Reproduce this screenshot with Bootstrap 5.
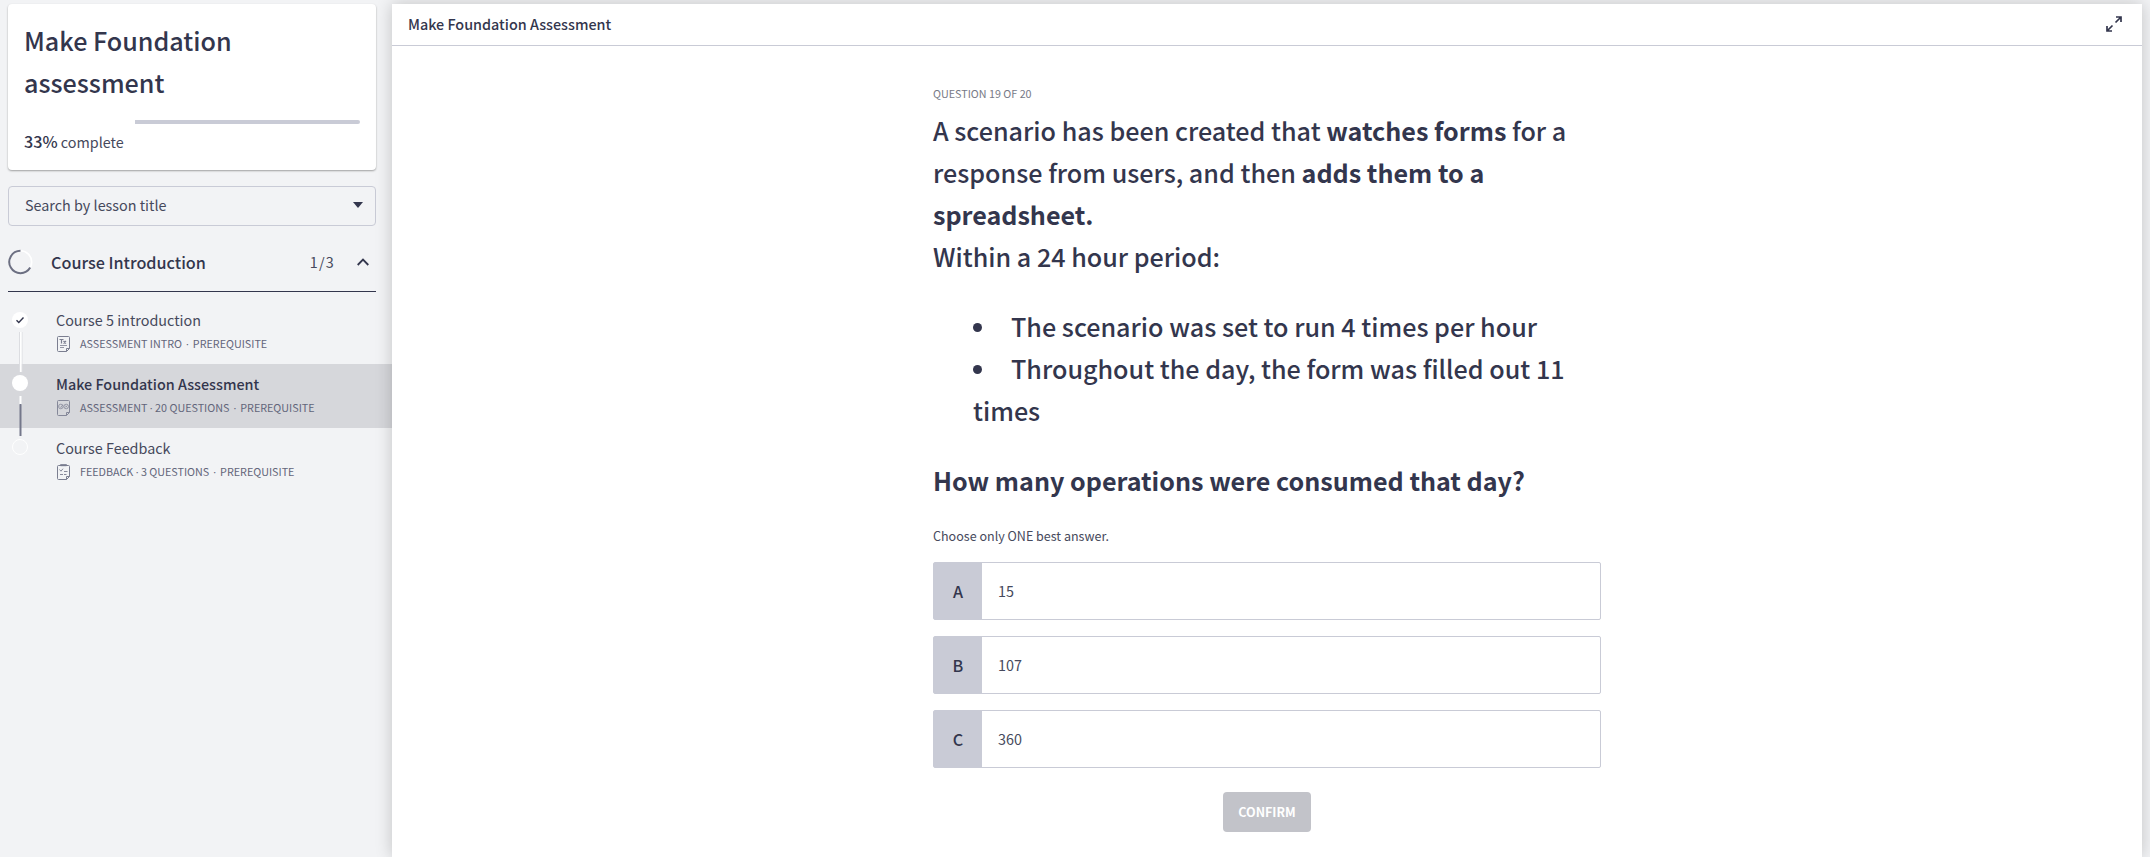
<!DOCTYPE html>
<html lang="en">
<head>
<meta charset="utf-8">
<title>Make Foundation Assessment</title>
<link rel="stylesheet" href="https://cdn.jsdelivr.net/npm/bootstrap@5.3.0/dist/css/bootstrap.min.css">
<style>
:root{--ink:#33364d;--text:#46495c;--soft:#62657a;--line:#c9cbd6}
body{font-family:"Noto Sans CJK SC","Open Sans",sans-serif;background:#f2f3f5;color:var(--text);height:857px;overflow:hidden;white-space:nowrap}
.semi{font-weight:500;color:var(--ink)}
.side{width:392px;padding:4px 16px 0 8px}
.course-card{height:166px;border-radius:4px;background:#fff;box-shadow:0 1px 2px rgba(0,0,0,.35);padding:15px 16px 0}
.course-title{font-size:25.14px;line-height:42px;margin:0}
.meter{height:4px;margin-top:17px}
.meter-rest{height:4px;background:var(--line);border-radius:0 2px 2px 0}
.complete{margin-top:4px}
.t16{font-size:14.36px;line-height:24px}
.t18{font-size:16.18px;line-height:26px}
.t12{font-size:10.75px;line-height:18px}
.t14{font-size:12.54px;line-height:20px}
.lesson-search{height:40px;margin-top:16px;border:1px solid var(--line);border-radius:4px;padding:0 12px 2px 16px}
.section-head{height:66px;border-bottom:1px solid var(--ink);margin-bottom:6px;padding-top:6px}
.section-title{padding-left:1px}
.section-count{letter-spacing:1.2px}
.chevron{margin:0 7px 0 22px}
.lesson{height:64px;margin:0 -16px 0 -8px;padding:8px 0 0 12px}
.lesson.active{background:#d6d7db}
.lesson.first{height:66px;padding-top:10px}
.rail{width:44px;margin-top:4px}
.lesson-sub{height:20px;color:var(--soft);margin-top:2px}
.lesson-sub svg{margin:0 9px 0 1px}
.sep{font-family:"Open Sans",sans-serif}
.sep.wide{padding:0 4px}
.main-pane{width:1750px;margin-top:4px;height:853px;background:#fff;box-shadow:0 0 16px rgba(0,0,0,.2)}
.pane-head{height:42px;border-bottom:1px solid var(--line);padding:0 20px 2px 16px}
.question{width:668px;margin-left:541px;padding-top:39px}
.q-count{color:#777a86}
.q-text{font-size:25.14px;line-height:42px;padding-top:6px}
.q-text b{font-size:25.1px}
.q-list{padding-left:40px;margin:28px 0;list-style:none}
.dot{display:inline-block;width:9px;height:9px;border-radius:50%;background:var(--ink);margin-right:29px;vertical-align:5px}
.hint{margin:25px 0 16px}
.answer{height:58px;border:1px solid var(--line);border-radius:2px;margin-bottom:16px}
.answer-key{width:48px;background:var(--line)}
.confirm{width:88px;height:40px;background:#c2c3c9;color:#fff;border-radius:4px;margin-top:24px}
</style>
</head>
<body>
<div class="d-flex">
  <aside class="side flex-shrink-0">
    <div class="course-card">
      <h1 class="course-title semi">Make Foundation<br>assessment</h1>
      <div class="meter d-flex justify-content-end"><div class="meter-rest" style="width:67%"></div></div>
      <div class="t16 complete"><span class="semi t18">33%</span> complete</div>
    </div>
    <div class="lesson-search d-flex align-items-center justify-content-between t16">
      <span>Search by lesson title</span>
      <svg width="10" height="6"><path d="M0 0h10L5 6z" fill="#33364d"/></svg>
    </div>
    <div class="section-head d-flex align-items-center">
      <svg width="26" height="26" class="me-3 overflow-visible" fill="none" stroke-width="1.6"><circle cx="12.500" cy="13" r="11.2" stroke="#fff"/><path d="M12.500 1.800A11.200 11.200 0 1 0 22.200 18.600" stroke="#6c6f82" stroke-width="2"/></svg>
      <span class="t18 semi flex-grow-1 section-title">Course Introduction</span>
      <span class="t16 section-count">1/3</span>
      <svg class="chevron" width="12" height="8" fill="none" stroke="#33364d" stroke-width="1.8"><path d="M.7 7 6 1.6 11.3 7"/></svg>
    </div>

    <div class="lesson first d-flex">
      <svg class="rail flex-shrink-0 overflow-visible" height="50"><circle cx="8" cy="8" r="8" fill="#fff"/><path d="M4.500 8.300l2.300 2.300 4.700-5" fill="none" stroke="#33364d" stroke-width="1.400"/><path d="M7.500 20v40M10 20v40" stroke="#dcdde1"/><path d="M8.800 20v40" stroke="#fff" stroke-width="1.600"/></svg>
      <div><div class="t16">Course 5 introduction</div>
        <div class="lesson-sub d-flex align-items-center t12"><svg width="14" height="16" fill="none" stroke="#7b7e90"><path d="M1.500.5h10a1 1 0 0 1 1 1v11l-3 3h-8a1 1 0 0 1-1-1v-13a1 1 0 0 1 1-1zM9.500 15.500v-3h3"/><path d="M2.500 3.500h4M4.500 3.500v4M6.500 5l2.500 2.500M9 5l-2.500 2.500" stroke-width="1.200"/><path d="M3 9.500h7M3 11.500h4" stroke-width=".8"/></svg><span>ASSESSMENT INTRO<span class="sep wide">·</span>PREREQUISITE</span></div></div>
    </div>
    <div class="lesson active d-flex">
      <svg class="rail flex-shrink-0 overflow-visible" height="50"><circle cx="8" cy="7" r="8" fill="#fff"/><path d="M8.500 20v9" stroke="#fff" stroke-width="2"/><path d="M8.500 28v32" stroke="#74778a" stroke-width="2"/></svg>
      <div><div class="t16 semi">Make Foundation Assessment</div>
        <div class="lesson-sub d-flex align-items-center t12"><svg width="14" height="16" fill="none" stroke="#858899"><path d="M1.500.5h10a1 1 0 0 1 1 1v11l-3 3h-8a1 1 0 0 1-1-1v-13a1 1 0 0 1 1-1zM9.500 15.500v-3h3"/><g stroke-width=".8"><circle cx="3.800" cy="6.500" r="2.300"/><circle cx="9.200" cy="6.500" r="2.300"/><path d="M2.800 6.500l1 1 2-2.700M8.300 5.600l1.800 1.800M10.100 5.600l-1.800 1.800"/></g></svg><span>ASSESSMENT <span class="sep">·</span> 20 QUESTIONS<span class="sep wide">·</span>PREREQUISITE</span></div></div>
    </div>
    <div class="lesson d-flex">
      <svg class="rail flex-shrink-0 overflow-visible" height="50"><circle cx="8" cy="7" r="7.500" fill="none" stroke="#fff"/></svg>
      <div><div class="t16">Course Feedback</div>
        <div class="lesson-sub d-flex align-items-center t12"><svg width="14" height="16" fill="none" stroke="#7b7e90"><path d="M1.500 1.500h10a1 1 0 0 1 1 1v10l-3 3h-8a1 1 0 0 1-1-1v-12a1 1 0 0 1 1-1zM9.500 15.500v-3h3"/><path d="M3.500.700h6v1h-6z" fill="#6c6f82"/><path d="M2.500 5.500l1.500 1.700 2-2.500M7 7.500h3.500M3 10.500h3M7 10.500h2.500" stroke-width=".9"/></svg><span>FEEDBACK <span class="sep">·</span> 3 QUESTIONS<span class="sep wide">·</span>PREREQUISITE</span></div></div>
    </div>
  </aside>

  <main class="main-pane flex-shrink-0">
    <div class="pane-head d-flex align-items-center justify-content-between">
      <span class="t16 semi">Make Foundation Assessment</span>
      <svg width="16" height="16" fill="none" stroke="#33364d" stroke-width="1.700"><path d="M9.500 6.500 15 1M10 1h5v5M6.500 9.500 1 15M1 10v5h5"/></svg>
    </div>
    <section class="question">
      <div class="t12 q-count">QUESTION 19 OF 20</div>
      <div class="q-text semi">
        A scenario has been created that <b>watches forms</b> for a<br>response from users, and then <b>adds them to a<br>spreadsheet.</b><br>Within a 24 hour period:
        <ul class="q-list"><li><span class="dot"></span>The scenario was set to run 4 times per hour</li><li><span class="dot"></span>Throughout the day, the form was filled out 11<br>times</li></ul>
        <b>How many operations were consumed that day?</b>
      </div>
      <div class="t14 hint">Choose only ONE best answer.</div>
      <div class="answer d-flex"><div class="answer-key t18 semi d-flex align-items-center justify-content-center">A</div><div class="t16 px-3 align-self-center">15</div></div>
      <div class="answer d-flex"><div class="answer-key t18 semi d-flex align-items-center justify-content-center">B</div><div class="t16 px-3 align-self-center">107</div></div>
      <div class="answer d-flex"><div class="answer-key t18 semi d-flex align-items-center justify-content-center">C</div><div class="t16 px-3 align-self-center">360</div></div>
      <div class="confirm t14 fw-bold mx-auto d-flex align-items-center justify-content-center">CONFIRM</div>
    </section>
  </main>
</div>
<script src="https://cdn.jsdelivr.net/npm/bootstrap@5.3.0/dist/js/bootstrap.bundle.min.js"></script>
</body>
</html>
